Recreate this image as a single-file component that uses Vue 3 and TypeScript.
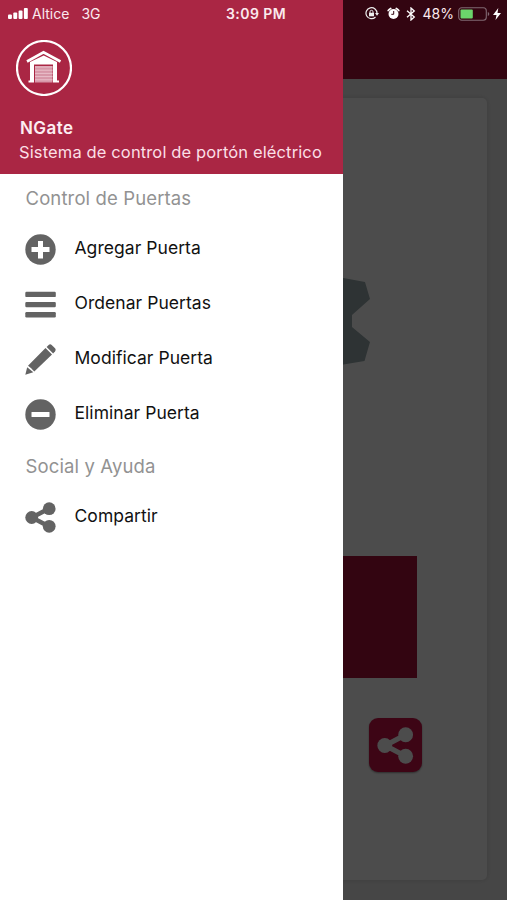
<script setup lang="ts">
interface MenuItem {
  label: string
  icon: 'plus' | 'menu' | 'pencil' | 'minus' | 'share'
}
interface MenuSection {
  title: string
  items: MenuItem[]
}

const sections: MenuSection[] = [
  {
    title: 'Control de Puertas',
    items: [
      { label: 'Agregar Puerta', icon: 'plus' },
      { label: 'Ordenar Puertas', icon: 'menu' },
      { label: 'Modificar Puerta', icon: 'pencil' },
      { label: 'Eliminar Puerta', icon: 'minus' },
    ],
  },
  { title: 'Social y Ayuda', items: [{ label: 'Compartir', icon: 'share' }] },
]
</script>

<template>
  <div class="screen">
    <main class="page">
      <div class="page-header"></div>
      <section class="card">
        <svg class="gear" viewBox="0 0 232 88">
          <path d="M5 4 26.500 0H205.500L227 4 232 21 214 37V49L232 64 226.500 83 205.500 86.500H26.500L5.500 83 0 64 18 49V37L0 21Z" fill="#9aacae" />
        </svg>
        <div class="gate-button"></div>
        <div class="share-button">
          <svg viewBox="0 0 31 31" width="37" height="37">
            <path d="M24 6.500 7 15.500 24 24.500" fill="none" stroke="#fff" stroke-width="4.400" />
            <g fill="#fff"><circle cx="24" cy="6.500" r="6.200" /><circle cx="6.500" cy="15.500" r="6.200" /><circle cx="24" cy="24.500" r="6.200" /></g>
          </svg>
        </div>
      </section>
    </main>
    <div class="backdrop"></div>

    <aside class="drawer">
      <header class="brand">
        <svg class="logo" viewBox="0 0 56 56" width="56" height="56">
          <circle cx="28" cy="28" r="27" fill="none" stroke="#fff" stroke-width="2.200" />
          <path d="M11 21.500 27.500 12.300 44.500 21.500" fill="none" stroke="#fff" stroke-width="2.600" />
          <path d="M14 22 27.700 15.500 41 22V40.500H43V42.500H37V24.500H18V42.500H12.500V40.500H14Z" fill="#fff" />
          <path d="M19 26H36.500V42.500H19Z" fill="#d797a8" />
          <path d="M19 27H36.500M19 30.200H36.500M19 33.400H36.500M19 36.600H36.500M19 39.800H36.500" stroke="#e9bfca" stroke-width="1" />
        </svg>
        <h1 class="name">NGate</h1>
        <p class="tagline"><span>Sistema de control de portón eléctrico</span></p>
      </header>

      <nav class="menu">
        <section v-for="section in sections" :key="section.title">
          <h2 class="section-title">{{ section.title }}</h2>
          <ul class="items">
            <li v-for="item in section.items" :key="item.label" class="item">
              <svg class="item-icon" viewBox="0 0 31 31" fill="#636363">
                <template v-if="item.icon === 'plus'">
                  <circle cx="15.500" cy="15.500" r="15.200" />
                  <path d="M13 7h5v6h6.500v5h-6.500v6.500h-5v-6.500H6.500v-5h6.500Z" fill="#fff" />
                </template>
                <template v-else-if="item.icon === 'menu'">
                  <rect x="0.300" y="2.700" width="30.500" height="5.400" rx="1.200" />
                  <rect x="0.300" y="12.900" width="30.500" height="5.400" rx="1.200" />
                  <rect x="0.300" y="23.100" width="30.500" height="5.400" rx="1.200" />
                </template>
                <template v-else-if="item.icon === 'pencil'">
                  <path d="M0.300 30.700 2.200 23.300 8.300 28.200Z" />
                  <path d="M3 21.800 20.500 4 27 10.500 9.300 27.500 7.300 25.500 6.200 24.300Z" />
                  <path d="M21.600 3 23.600 1Q25.200-.4 26.700 1L30 4.300Q31.300 5.800 30 7.400L28.100 9.400Z" />
                </template>
                <template v-else-if="item.icon === 'minus'">
                  <circle cx="15.500" cy="15.500" r="15.200" />
                  <rect x="6.500" y="13" width="18" height="5" rx="0.500" fill="#fff" />
                </template>
                <template v-else>
                  <path d="M24 6.500 7 15.500 24 24.500" fill="none" stroke="#636363" stroke-width="4.500" />
                  <circle cx="24.200" cy="6.700" r="6.400" />
                  <circle cx="6.700" cy="15.500" r="6.400" />
                  <circle cx="24.200" cy="24.300" r="6.400" />
                </template>
              </svg>
              <span class="item-label">{{ item.label }}</span>
            </li>
          </ul>
        </section>
      </nav>
    </aside>

    <div class="status-bar">
      <div class="status-left">
        <svg viewBox="0 0 20 11" width="20" height="11" fill="#fff">
          <rect x="0" y="6.500" width="3.900" height="4.500" rx="1" /><rect x="5.300" y="4.500" width="3.900" height="6.500" rx="1" />
          <rect x="10.600" y="2.500" width="3.900" height="8.500" rx="1" /><rect x="15.900" y="0" width="3.900" height="11" rx="1" />
        </svg>
        <span class="carrier">Altice</span>
        <span class="network">3G</span>
      </div>
      <span class="clock">3:09 PM</span>
      <div class="status-right">
        <svg class="lock" viewBox="0 0 14 13" width="14" height="13" fill="none" stroke="#eee">
          <path d="M10.500 10A5.500 5.500 0 1 1 12 6.500" stroke-width="1.200" />
          <path d="M10 6h4l-2 2.800Z" fill="#eee" stroke="none" />
          <rect x="4" y="5.800" width="5" height="3.500" fill="#eee" stroke="none" />
          <path d="M5 6V4.800a1.500 1.500 0 0 1 3 0V6" stroke-width="1" />
        </svg>
        <svg class="alarm" viewBox="0 0 13 13" width="13" height="13">
          <circle cx="6.500" cy="7" r="5" fill="#fff" />
          <path d="M1.200 3.500A9 9 0 0 1 3.700 1.400M11.800 3.500A9 9 0 0 0 9.300 1.400" stroke="#fff" stroke-width="1.700" stroke-linecap="round" />
          <path d="M6.700 4V7.300H4.300" fill="none" stroke="#330511" stroke-width="1" />
        </svg>
        <svg class="bluetooth" viewBox="0 0 10 14" width="10" height="14" fill="none" stroke="#fff" stroke-width="1.300">
          <path d="M1 3.700 8.300 10 5 13V1L8.300 4 1 10.300" />
        </svg>
        <span class="percent">48%</span>
        <svg class="battery" viewBox="0 0 32 14" width="32" height="14">
          <rect x=".7" y=".7" width="27.600" height="12.600" rx="3" fill="none" stroke="#806872" stroke-width="1.100" />
          <rect x="2.500" y="2.500" width="12.300" height="9" rx="1" fill="#6bd56b" />
          <path d="M29.800 5v4q1.500-.6 1.500-2t-1.500-2Z" fill="#806872" />
        </svg>
        <svg class="bolt" viewBox="0 0 8 12" width="8" height="12"><path d="M5.300 0 0 7H3.500L2.500 12 8 5H4.500Z" fill="#fff" /></svg>
      </div>
    </div>
  </div>
</template>

<style>
body {
  margin: 0;
}
</style>

<style scoped>
.screen {
  position: relative;
  width: 507px;
  height: 900px;
  overflow: hidden;
  font-family: Inter, "Liberation Sans", sans-serif;
}
.page {
  display: flex;
  flex-direction: column;
  height: 100%;
  background: #ebebeb;
}
.page-header {
  height: 79px;
  background: #aa1139;
}
.card {
  display: flex;
  flex-direction: column;
  align-items: center;
  box-sizing: border-box;
  height: 782px;
  margin: 19px 20px 0;
  padding-top: 180px;
  border-radius: 5px;
  background: #fff;
  box-shadow: 0 0 5px #c8c8c8;
}
.gear {
  width: 232px;
  height: 88px;
}
.gate-button {
  width: 327px;
  height: 122px;
  margin-top: 190px;
  background: #aa1139;
}
.share-button {
  display: flex;
  align-items: center;
  justify-content: center;
  align-self: flex-end;
  width: 53px;
  height: 54px;
  margin: 40px 65px 0 0;
  border-radius: 9px;
  background: #cc1149;
  box-shadow: 0 1px 2px #999;
}
.backdrop {
  position: absolute;
  inset: 0;
  background: rgba(0, 0, 0, 0.7);
}
.drawer {
  position: absolute;
  inset: 0 auto 0 0;
  width: 343px;
  background: #fff;
}
.brand {
  box-sizing: border-box;
  height: 174px;
  padding: 40px 0 0 16px;
  background: #aa2644;
  color: #fff;
}
.logo {
  display: block;
}
.name {
  margin: 20px 0 0 4px;
  font-size: 17px;
  font-weight: 600;
  line-height: 24px;
  letter-spacing: 0.45px;
  color: #fdeef2;
}
.tagline {
  margin: 1px 0 0 3px;
  font-size: 16.5px;
  line-height: 23px;
  letter-spacing: 0.13px;
  white-space: nowrap;
  color: #fbdfe6;
}
.section-title {
  margin: 0;
  padding-left: 25.5px;
  font-size: 18.5px;
  font-weight: 400;
  line-height: 48px;
  letter-spacing: 0.13px;
  color: #929292;
}
.items {
  margin: 0;
  padding: 0;
  list-style: none;
}
.item {
  display: flex;
  align-items: center;
  height: 55px;
  padding-left: 25px;
}
.item-icon {
  width: 31px;
  height: 31px;
}
.item-label {
  margin: 0 0 4px 18.5px;
  font-size: 17.5px;
  letter-spacing: 0.05px;
  color: #111;
}
.status-bar {
  position: absolute;
  inset: 0 0 auto;
  display: grid;
  grid-template-columns: 226px 1fr auto;
  align-items: center;
  height: 27px;
  font-size: 14px;
  color: #fbe9ee;
}
.status-left,
.status-right {
  display: flex;
  align-items: center;
}
.status-left {
  padding-left: 8px;
}
.carrier {
  margin-left: 4px;
}
.network {
  margin-left: 12px;
}
.clock {
  font-weight: 600;
  letter-spacing: 0.45px;
}
.status-right {
  padding-right: 6px;
}
.alarm {
  margin-left: 8px;
}
.bluetooth {
  margin-left: 6px;
}
.percent {
  margin-left: 7px;
}
.battery {
  margin-left: 4px;
}
.bolt {
  margin-left: 3px;
}
</style>
